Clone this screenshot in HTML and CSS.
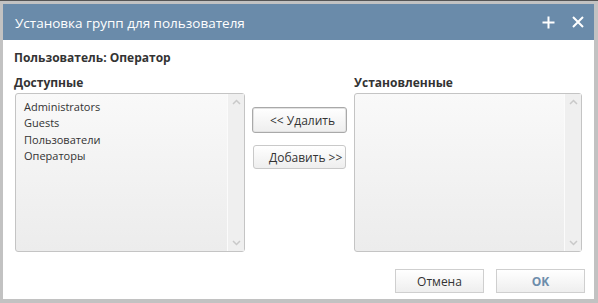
FILE: index.html
```html
<!DOCTYPE html>
<html lang="ru">
<head>
<meta charset="utf-8">
<title>Установка групп для пользователя</title>
<link rel="stylesheet" href="styles.css">
</head>
<body>
<div class="dialog">
  <div class="titlebar">
    <span class="title">Установка групп для пользователя</span>
    <div class="tools">
      <svg class="tool" width="13" height="13" viewBox="0 0 13 13"><path d="M6.5 0.5v12M0.5 6.5h12" stroke="#fff" stroke-width="2" fill="none"/></svg>
      <svg class="tool" width="12" height="12" viewBox="0 0 12 12"><path d="M1 1l10 10M11 1L1 11" stroke="#fff" stroke-width="2" fill="none"/></svg>
    </div>
  </div>
  <div class="content">
    <div class="user">Пользователь: Оператор</div>
    <div class="lists">
      <div class="col col-left">
        <div class="label">Доступные</div>
        <div class="listbox">
          <div class="items">
            <div class="item">Administrators</div>
            <div class="item">Guests</div>
            <div class="item">Пользователи</div>
            <div class="item">Операторы</div>
          </div>
          <div class="scroll">
            <svg width="9" height="6" viewBox="0 0 9 6"><path d="M1 5l3.5-3.5L8 5" stroke="#c9c9c9" stroke-width="1.5" fill="none"/></svg>
            <svg width="9" height="6" viewBox="0 0 9 6"><path d="M1 1l3.5 3.5L8 1" stroke="#c9c9c9" stroke-width="1.5" fill="none"/></svg>
          </div>
        </div>
      </div>
      <div class="mid">
        <button class="btn btn-move btn-focus">&lt;&lt; Удалить</button>
        <button class="btn btn-move">Добавить &gt;&gt;</button>
      </div>
      <div class="col col-right">
        <div class="label">Установленные</div>
        <div class="listbox">
          <div class="items"></div>
          <div class="scroll">
            <svg width="9" height="6" viewBox="0 0 9 6"><path d="M1 5l3.5-3.5L8 5" stroke="#c9c9c9" stroke-width="1.5" fill="none"/></svg>
            <svg width="9" height="6" viewBox="0 0 9 6"><path d="M1 1l3.5 3.5L8 1" stroke="#c9c9c9" stroke-width="1.5" fill="none"/></svg>
          </div>
        </div>
      </div>
    </div>
    <div class="footer">
      <button class="btn btn-foot">Отмена</button>
      <button class="btn btn-foot btn-ok">OK</button>
    </div>
  </div>
</div>
</body>
</html>
```

FILE: styles.css
```css
html, body {
  margin: 0;
  padding: 0;
}
body {
  width: 598px;
  height: 303px;
  background: #c2c2c2;
  border-top: 1px solid #555;
  box-sizing: border-box;
  font-family: "Open Sans", "Noto Sans", sans-serif;
  overflow: hidden;
}
.dialog {
  margin: 3px 4px 0 3px;
  width: 591px;
  height: 295px;
  background: #fff;
  display: flex;
  flex-direction: column;
}
.titlebar {
  height: 36px;
  background: #6a8baa;
  display: flex;
  align-items: center;
  padding: 0 10px 0 12px;
}
.title {
  color: #fff;
  font-size: 13.5px;
  flex: 1;
  padding-top: 1px;
}
.tools {
  display: flex;
  align-items: center;
  gap: 17px;
}
.content {
  flex: 1;
  display: flex;
  flex-direction: column;
  padding: 10px 9px 0 11px;
}
.user {
  font-size: 12px;
  font-weight: bold;
  color: #333;
  line-height: 16px;
}
.lists {
  display: flex;
  margin-top: 9px;
}
.label {
  font-size: 12px;
  font-weight: bold;
  color: #333;
  line-height: 16px;
  height: 18px;
}
.col-left { width: 231px; }
.col-right { width: 228px; margin-left: 7px; }
.col-left .listbox { margin-left: 1px; }
.listbox {
  height: 159px;
  box-sizing: border-box;
  border: 1px solid #c4c4c4;
  border-radius: 3px;
  background: linear-gradient(#f9f9f9, #ececec);
  display: flex;
}
.items {
  flex: 1;
  padding: 5px 8px;
}
.item {
  font-size: 11px;
  color: #333;
  line-height: 16.4px;
}
.scroll {
  width: 16px;
  border-left: 1px solid #fbfbfb;
  background: #efefef;
  display: flex;
  flex-direction: column;
  justify-content: space-between;
  align-items: center;
  padding: 5px 0 5px;
}
.mid {
  display: flex;
  flex-direction: column;
  padding-top: 32px;
  margin-left: 7px;
  gap: 12px;
}
.btn {
  font-family: "Open Sans", "Noto Sans", sans-serif;
  font-size: 12px;
  color: #333;
  background: linear-gradient(#ffffff, #eeeeee);
  border: 1px solid #c9c9c9;
  border-radius: 3px;
  padding: 0;
  margin: 0;
}
.btn-move {
  width: 93px;
  height: 24px;
  text-align: left;
  padding-left: 15px;
  white-space: nowrap;
  margin-left: 1px;
}
.btn-focus {
  height: 26px;
  width: 95px;
  margin-left: 0;
  border-color: #a9a9a9;
  box-shadow: inset 0 0 0 1px #e2e2e2;
  padding-left: 17px;
}
.footer {
  display: flex;
  justify-content: flex-end;
  gap: 12px;
  margin-top: 17px;
}
.btn-foot {
  width: 89px;
  height: 24px;
  border-radius: 0;
  border-color: #cfcfcf;
  text-align: center;
}
.btn-ok {
  color: #6d8dab;
  font-weight: bold;
}
```
